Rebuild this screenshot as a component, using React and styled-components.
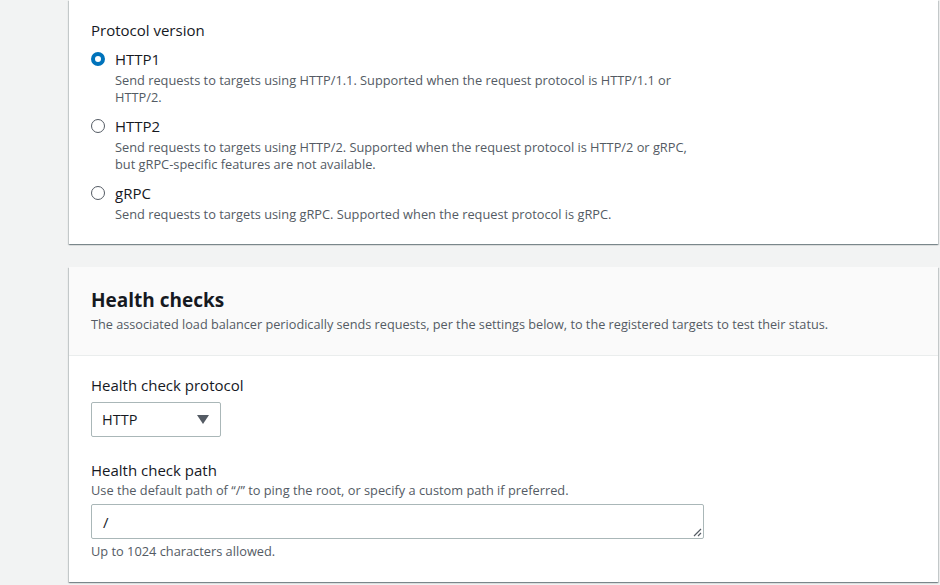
import React from 'react';
import styled, { createGlobalStyle } from 'styled-components';

const GlobalStyle = createGlobalStyle`
  html, body {
    margin: 0;
    padding: 0;
    background: #f2f3f3;
    font-family: "Open Sans", "Noto Sans", "Liberation Sans", sans-serif;
    color: #16191f;
  }
`;

const Page = styled.div`
  padding: 0 2px 0 69px;
  display: flex;
  flex-direction: column;
  gap: 23px;
  height: 585px;
  overflow: hidden;
`;

const Card = styled.section`
  background: #fff;
  box-shadow: 0 1px 1px 0 rgba(0, 28, 36, 0.3), 1px 1px 1px 0 rgba(0, 28, 36, 0.15),
    -1px 1px 1px 0 rgba(0, 28, 36, 0.15);
`;

const CardBody = styled.div`
  padding: ${props => props.padding || '20px 22px'};
`;

const CardHeader = styled.div`
  background: #fafafa;
  border-bottom: 1px solid #eaeded;
  padding: 21px 22px 22px;
`;

const Heading = styled.h2`
  margin: 0;
  font-size: 19px;
  font-weight: 700;
  line-height: 24px;
  color: #16191f;
`;

const HeaderDesc = styled.p`
  margin: 4px 0 0;
  font-size: 12.7px;
  line-height: 17px;
  color: #545b64;
`;

const Label = styled.div`
  font-size: 15px;
  line-height: 22px;
  color: #16191f;
`;

const RadioGroup = styled.div`
  margin-top: 6px;
  display: flex;
  flex-direction: column;
  gap: 8px;
`;

const RadioRow = styled.label`
  display: grid;
  grid-template-columns: 24px 1fr;
  align-items: start;
`;

const RadioCircle = styled.span`
  width: 14px;
  height: 14px;
  margin-top: 5px;
  border-radius: 50%;
  box-sizing: border-box;
  border: ${props => (props.checked ? '4px solid #0073bb' : '1.5px solid #545b64')};
  background: #fff;
`;

const RadioTitle = styled.div`
  font-size: 15px;
  line-height: 24px;
`;

const RadioDesc = styled.div`
  grid-column: 2;
  margin-top: 1px;
  font-size: 12.8px;
  line-height: 17px;
  color: #545b64;
  max-width: 580px;
`;

const Field = styled.div`
  display: flex;
  flex-direction: column;
  margin-bottom: ${props => props.gap || '0'};
`;

const Hint = styled.div`
  font-size: 12.8px;
  line-height: 17px;
  color: #545b64;
  margin-top: ${props => props.top || '0'};
`;

const Select = styled.div`
  margin-top: 6px;
  width: 130px;
  height: 35px;
  box-sizing: border-box;
  border: 1px solid #aab7b8;
  border-radius: 2px;
  display: flex;
  align-items: center;
  justify-content: space-between;
  padding: 0 11px 0 10px;
  font-size: 14.5px;
`;

const Caret = styled.span`
  width: 0;
  height: 0;
  border-left: 6px solid transparent;
  border-right: 6px solid transparent;
  border-top: 9px solid #545b64;
`;

const TextArea = styled.div`
  position: relative;
  margin-top: 5px;
  width: 613px;
  height: 35px;
  box-sizing: border-box;
  border: 1px solid #aab7b8;
  border-radius: 2px;
  padding: 6px 11px;
  font-size: 15px;
  line-height: 22px;
`;

const Grip = styled.svg`
  position: absolute;
  right: 1px;
  bottom: 1px;
`;

const options = [
  {
    name: 'HTTP1',
    checked: true,
    desc: 'Send requests to targets using HTTP/1.1. Supported when the request protocol is HTTP/1.1 or HTTP/2.',
  },
  {
    name: 'HTTP2',
    desc: 'Send requests to targets using HTTP/2. Supported when the request protocol is HTTP/2 or gRPC, but gRPC-specific features are not available.',
  },
  {
    name: 'gRPC',
    desc: 'Send requests to targets using gRPC. Supported when the request protocol is gRPC.',
  },
];

export default function App() {
  return (
    <>
      <GlobalStyle />
      <Page>
        <Card>
          <CardBody padding="19px 22px 21px">
            <Label>Protocol version</Label>
            <RadioGroup>
              {options.map(o => (
                <RadioRow key={o.name}>
                  <RadioCircle checked={o.checked} />
                  <RadioTitle>{o.name}</RadioTitle>
                  <RadioDesc>{o.desc}</RadioDesc>
                </RadioRow>
              ))}
            </RadioGroup>
          </CardBody>
        </Card>

        <Card>
          <CardHeader>
            <Heading>Health checks</Heading>
            <HeaderDesc>
              The associated load balancer periodically sends requests, per the settings below, to the registered targets to test their status.
            </HeaderDesc>
          </CardHeader>
          <CardBody padding="18px 22px 22px">
            <Field gap="22px">
              <Label>Health check protocol</Label>
              <Select>
                HTTP
                <Caret />
              </Select>
            </Field>
            <Field>
              <Label>Health check path</Label>
              <Hint top="1px">Use the default path of “/” to ping the root, or specify a custom path if preferred.</Hint>
              <TextArea>
                /
                <Grip width="10" height="10" viewBox="0 0 10 10">
                  <path d="M9 2 L2 9 M9 6 L6 9" stroke="#545b64" strokeWidth="1.2" />
                </Grip>
              </TextArea>
              <Hint top="4px">Up to 1024 characters allowed.</Hint>
            </Field>
          </CardBody>
        </Card>
      </Page>
    </>
  );
}
